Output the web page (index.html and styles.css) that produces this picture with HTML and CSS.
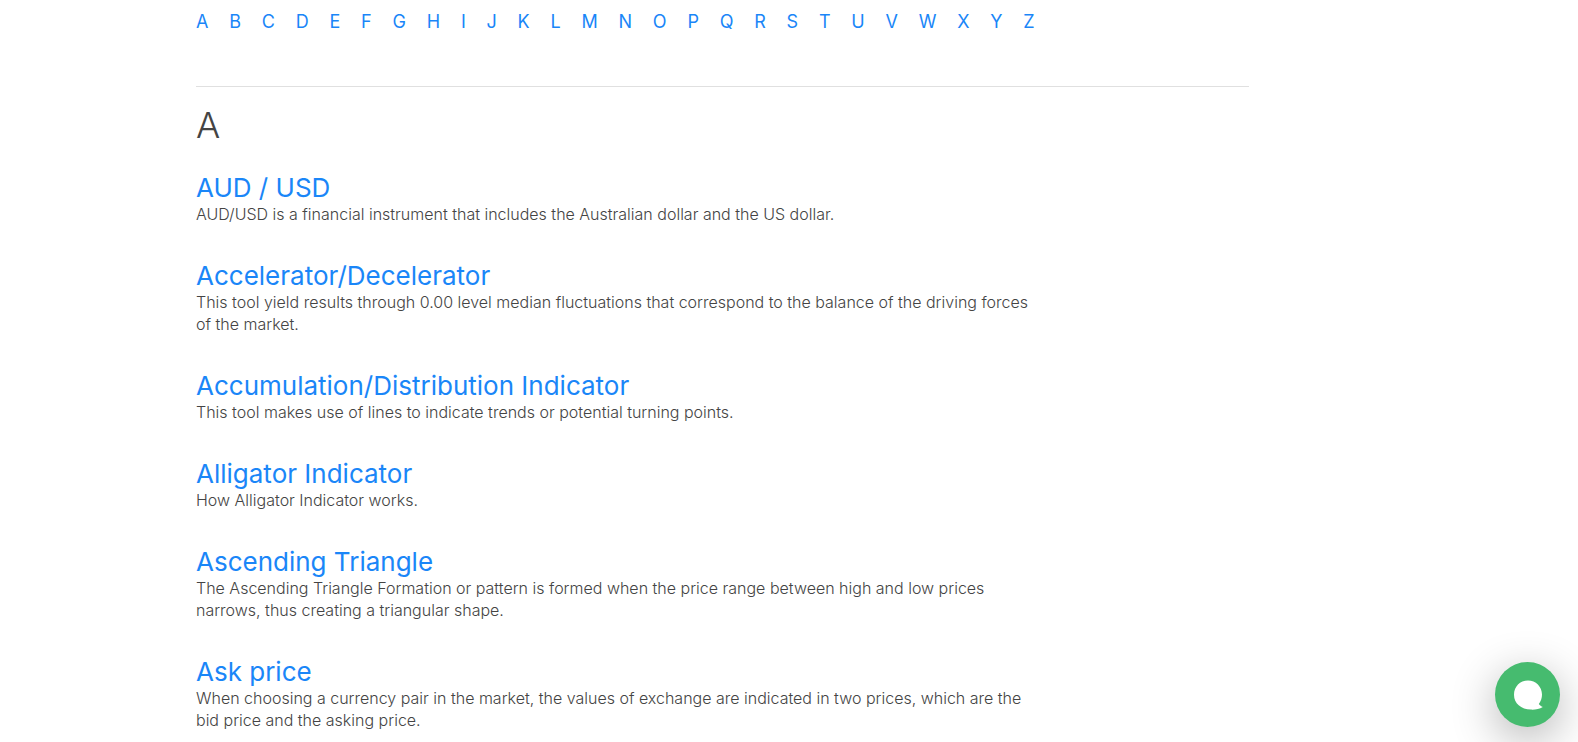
FILE: index.html
```html
<!DOCTYPE html>
<html lang="en">
<head>
    <meta charset="UTF-8">
    <meta name="viewport" content="width=device-width, initial-scale=1.0">
    <title>Glossary</title>
    <link rel="stylesheet" href="styles.css">
</head>
<body>
    <div class="container">
        <main class="glossary">
            <nav class="letters" aria-label="Glossary letters">
                <a href="#a">A</a>
                <a href="#b">B</a>
                <a href="#c">C</a>
                <a href="#d">D</a>
                <a href="#e">E</a>
                <a href="#f">F</a>
                <a href="#g">G</a>
                <a href="#h">H</a>
                <a href="#i">I</a>
                <a href="#j">J</a>
                <a href="#k">K</a>
                <a href="#l">L</a>
                <a href="#m">M</a>
                <a href="#n">N</a>
                <a href="#o">O</a>
                <a href="#p">P</a>
                <a href="#q">Q</a>
                <a href="#r">R</a>
                <a href="#s">S</a>
                <a href="#t">T</a>
                <a href="#u">U</a>
                <a href="#v">V</a>
                <a href="#w">W</a>
                <a href="#x">X</a>
                <a href="#y">Y</a>
                <a href="#z">Z</a>
            </nav>

            <section class="group" id="a">
                <h2>A</h2>

                <article class="term">
                    <h3><a href="#aud-usd">AUD / USD</a></h3>
                    <p>AUD/USD is a financial instrument that includes the Australian dollar and the US dollar.</p>
                </article>

                <article class="term">
                    <h3><a href="#accelerator">Accelerator/Decelerator</a></h3>
                    <p>This tool yield results through 0.00 level median fluctuations that correspond to the balance of the driving forces of the market.</p>
                </article>

                <article class="term">
                    <h3><a href="#accumulation">Accumulation/Distribution Indicator</a></h3>
                    <p>This tool makes use of lines to indicate trends or potential turning points.</p>
                </article>

                <article class="term">
                    <h3><a href="#alligator">Alligator Indicator</a></h3>
                    <p>How Alligator Indicator works.</p>
                </article>

                <article class="term">
                    <h3><a href="#ascending-triangle">Ascending Triangle</a></h3>
                    <p>The Ascending Triangle Formation or pattern is formed when the price range between high and low prices narrows, thus creating a triangular shape.</p>
                </article>

                <article class="term">
                    <h3><a href="#ask-price">Ask price</a></h3>
                    <p>When choosing a currency pair in the market, the values of exchange are indicated in two prices, which are the bid price and the asking price.</p>
                </article>
            </section>
        </main>
    </div>

    <button class="chat-button" type="button" aria-label="Open chat">
        <svg viewBox="0 0 30 30" aria-hidden="true">
            <path d="M15 0.5C22.8 0.5 29 6.7 29 14.5C29 18 28 21 25.8 24C27 25.4 28.2 26.2 29.8 27C26.5 29 22 29.8 18 29.6C8 29.4 1 23.5 1 14.8C1 6.6 7 0.5 15 0.5Z" fill="#fff"/>
        </svg>
    </button>
</body>
</html>
```

FILE: styles.css
```css
* {
    box-sizing: border-box;
}
body {
    font-family: Inter, 'Open Sans', sans-serif;
    font-weight: 300;
    font-size: 16px;
    line-height: 22px;
    margin: 0;
    color: #444;
    background: #fff;
    overflow-x: hidden;
}
a {
    color: #1a86f8;
    text-decoration: none;
}
a:hover {
    text-decoration: underline;
}
.container {
    max-width: 1186px;
    margin: 0 auto;
}
.glossary {
    max-width: 1053px;
}
.letters {
    display: flex;
    flex-wrap: wrap;
    justify-content: space-between;
    max-width: 839px;
    padding: 10px 0 52px;
    font-size: 18px;
    font-weight: 400;
    line-height: 24px;
}
.group {
    border-top: 1px solid #e0e0e0;
    padding-top: 16px;
}
.group h2 {
    margin: 0 0 26px;
    font-size: 36px;
    font-weight: 300;
    line-height: 44px;
}
.term {
    max-width: 848px;
    margin-bottom: 36px;
}
.term h3 {
    margin: 0;
    font-size: 26px;
    font-weight: 400;
    line-height: 30px;
}
.term p {
    margin: 0;
}
.chat-button {
    position: fixed;
    right: 18px;
    bottom: 15px;
    display: flex;
    align-items: center;
    justify-content: center;
    width: 65px;
    height: 65px;
    padding: 0;
    border: none;
    border-radius: 50%;
    background: #46bb6f;
    box-shadow: 0 12px 45px rgba(0,0,0,0.3);
    cursor: pointer;
}
.chat-button svg {
    width: 30px;
    height: 30px;
}
```
